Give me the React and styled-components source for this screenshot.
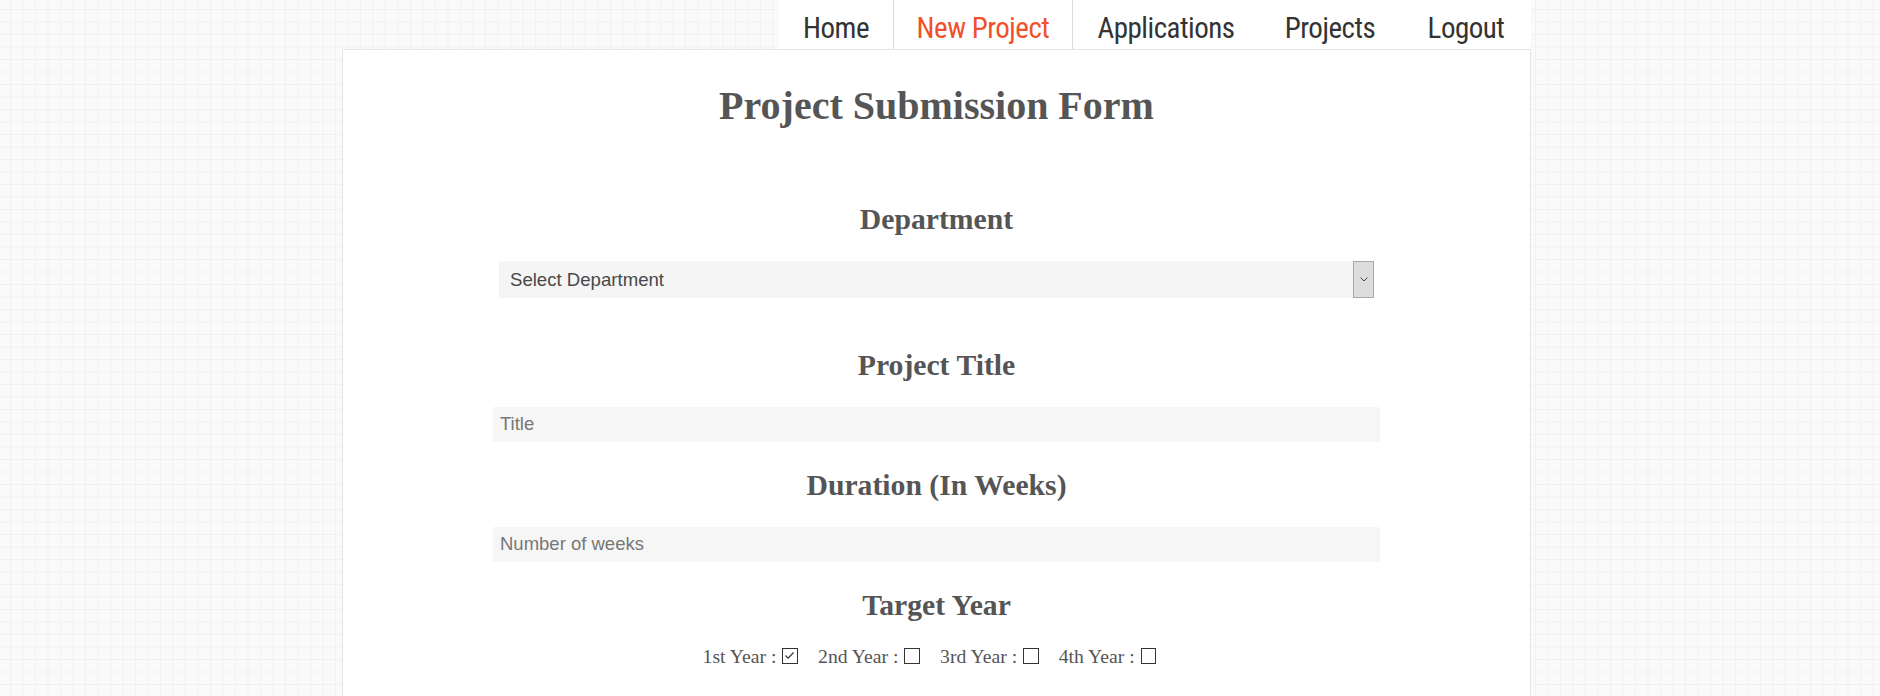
import React, { useState } from "react";
import styled, { createGlobalStyle } from "styled-components";

const GlobalStyle = createGlobalStyle`
  html, body {
    margin: 0;
    padding: 0;
  }
  body {
    background-color: #fafafa;
    background-image:
      linear-gradient(to right, #f1f0f6 1.3px, transparent 1.3px),
      linear-gradient(to bottom, #f1f0f6 1.3px, transparent 1.3px);
    background-size: 12.5px 12.5px;
    background-position: 10px 9px;
    font-family: "Liberation Serif", "Times New Roman", serif;
    overflow: hidden;
  }
`;

const Shell = styled.div`
  width: 1189px;
  margin-left: 342px;
`;

const Header = styled.header`
  display: flex;
  justify-content: flex-end;
  height: 49px;
`;

const Nav = styled.nav`
  display: flex;
  background: #fff;
  height: 49px;
`;

const NavLink = styled.a`
  box-sizing: border-box;
  display: block;
  width: ${(props) => props.$w}px;
  padding-top: 8px;
  line-height: 41px;
  text-align: center;
  white-space: nowrap;
  font-family: "Roboto", "Liberation Sans", sans-serif;
  font-stretch: 75%;
  font-size: 29px;
  letter-spacing: -0.5px;
  color: ${(props) => (props.$active ? "#f2502a" : "#333")};
  border-left: ${(props) => (props.$active ? "1px solid #dcdcdc" : "none")};
  border-right: ${(props) => (props.$active ? "1px solid #dcdcdc" : "none")};
  text-decoration: none;
  cursor: pointer;
`;

const Card = styled.main`
  box-sizing: border-box;
  min-height: 660px;
  padding-top: 36.2px;
  background: #fff;
  border: 1px solid #e6e6e6;
  border-bottom: none;
  display: flex;
  flex-direction: column;
  align-items: center;
`;

const PageTitle = styled.h1`
  margin: 0;
  font-size: 40px;
  line-height: 1;
  font-weight: bold;
  color: #555;
`;

const SectionTitle = styled.h2`
  margin: ${(props) => props.$gap || 28.7}px 0 0;
  font-size: 29.7px;
  line-height: 1;
  font-weight: bold;
  color: #555;
`;

const SelectWrap = styled.div`
  display: flex;
  width: 875px;
  height: 37px;
  margin-top: 26.8px;
  background: #f5f5f5;
`;

const Select = styled.select`
  flex: 1;
  appearance: none;
  border: none;
  outline: none;
  background: transparent;
  padding: 0 0 0 11px;
  font-family: "Liberation Sans", Arial, sans-serif;
  font-size: 18.6px;
  color: #484848;
`;

const ArrowBox = styled.span`
  box-sizing: border-box;
  width: 21px;
  display: flex;
  align-items: center;
  justify-content: center;
  background: #dddddd;
  border: 1px solid #a9a9a9;
  pointer-events: none;
`;

const TextInput = styled.input`
  box-sizing: border-box;
  width: 887px;
  height: 35px;
  margin-top: 26.6px;
  padding: 0 7px;
  border: none;
  outline: none;
  background: #f6f6f6;
  font-family: "Liberation Sans", Arial, sans-serif;
  font-size: 18.5px;
  color: #444;

  &::placeholder {
    color: #777;
  }
`;

const YearRow = styled.div`
  margin-top: 26.8px;
  padding-right: 14px;
  font-size: 19.7px;
  line-height: 1;
  color: #555;
`;

const YearOption = styled.label`
  cursor: pointer;

  & + & {
    margin-left: 20px;
  }
`;

const Box = styled.span`
  display: inline-block;
  box-sizing: border-box;
  width: 15.6px;
  height: 15.6px;
  margin-left: 6px;
  border: 1.3px solid #333;
  background: #fff;
  vertical-align: baseline;
  position: relative;
  top: 0.7px;

  svg {
    display: block;
  }
`;

const navItems = [
  { label: "Home", width: 114 },
  { label: "New Project", width: 180 },
  { label: "Applications", width: 186 },
  { label: "Projects", width: 142 },
  { label: "Logout", width: 130 },
];
const years = ["1st Year", "2nd Year", "3rd Year", "4th Year"];

function App() {
  const [checked, setChecked] = useState([true, false, false, false]);

  const toggle = (idx) => {
    setChecked(checked.map((v, i) => (i === idx ? !v : v)));
  };

  return (
    <>
      <GlobalStyle />
      <Shell>
        <Header>
          <Nav>
            {navItems.map((item) => (
              <NavLink
                key={item.label}
                $w={item.width}
                $active={item.label === "New Project"}
              >
                {item.label}
              </NavLink>
            ))}
          </Nav>
        </Header>
        <Card>
          <PageTitle>Project Submission Form</PageTitle>

          <SectionTitle $gap={78.4}>Department</SectionTitle>
          <SelectWrap>
            <Select defaultValue="">
              <option value="">Select Department</option>
              <option value="cs">Computer Science</option>
              <option value="ee">Electrical Engineering</option>
              <option value="me">Mechanical Engineering</option>
            </Select>
            <ArrowBox>
              <svg width="8" height="5" viewBox="0 0 8 5">
                <polyline points="0.5,0.5 4,4 7.5,0.5" fill="none" stroke="#444" strokeWidth="1" />
              </svg>
            </ArrowBox>
          </SelectWrap>

          <SectionTitle $gap={52.6}>Project Title</SectionTitle>
          <TextInput type="text" placeholder="Title" />

          <SectionTitle>Duration (In Weeks)</SectionTitle>
          <TextInput type="number" placeholder="Number of weeks" />

          <SectionTitle>Target Year</SectionTitle>
          <YearRow>
            {years.map((year, idx) => (
              <YearOption key={year} onClick={() => toggle(idx)}>
                {year} :
                <Box>
                  {checked[idx] && (
                    <svg width="13" height="13" viewBox="0 0 13 13">
                      <polyline points="2.5,6.5 5.2,9.2 10.5,3.5" fill="none" stroke="#333" strokeWidth="1.2" />
                    </svg>
                  )}
                </Box>
              </YearOption>
            ))}
          </YearRow>
        </Card>
      </Shell>
    </>
  );
}

export default App;
